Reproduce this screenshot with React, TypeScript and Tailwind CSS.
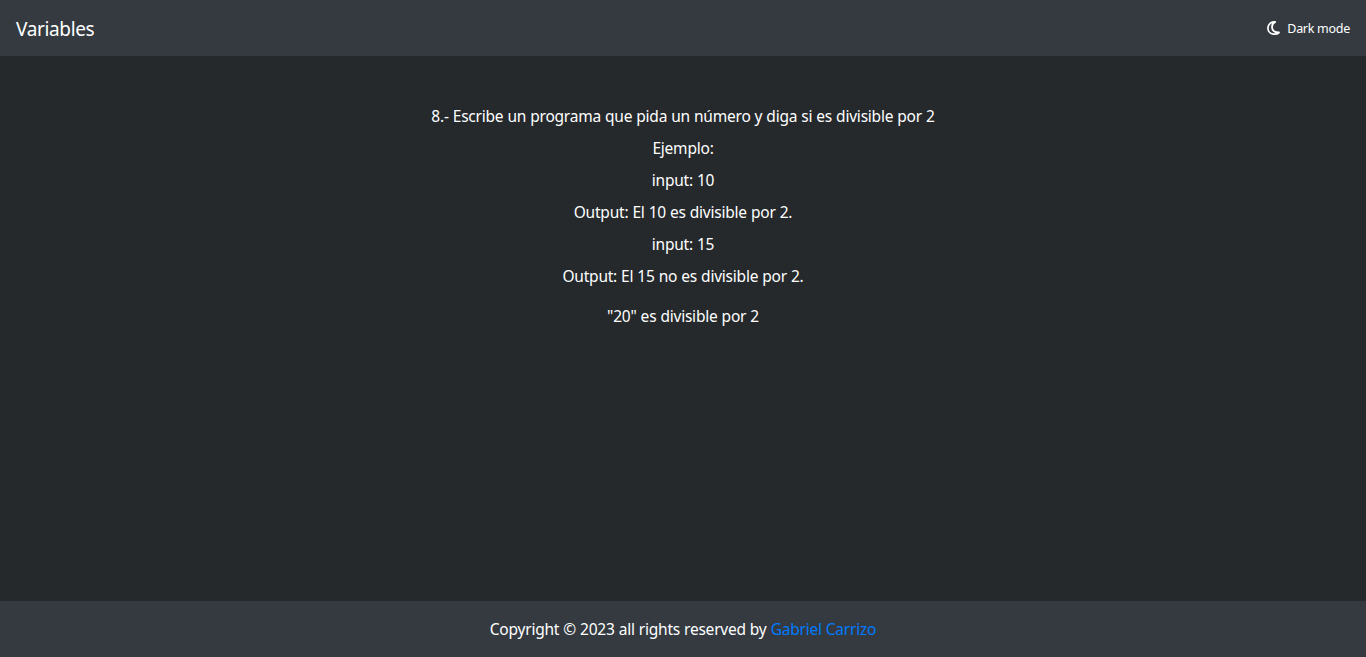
const lines = [
  "8.- Escribe un programa que pida un número y diga si es divisible por 2",
  "Ejemplo:",
  "input: 10",
  "Output: El 10 es divisible por 2.",
  "input: 15",
  "Output: El 15 no es divisible por 2.",
];

function MoonIcon() {
  return (
    <svg
      viewBox="0 0 13 14"
      className="h-[14px] w-[13px]"
      fill="none"
      stroke="currentColor"
      strokeWidth="1.8"
      strokeLinejoin="round"
      aria-hidden="true"
    >
      <path d="M8.2.9C3.8.8.9 3.4.9 7s2.8 6.1 6.6 6.1c1.9 0 3.5-.6 4.5-1.6C7.9 11.6 5 9.6 5 6.2 5 3.7 6.1 1.9 8.2.9Z" />
    </svg>
  );
}

export default function App() {
  return (
    <div className="flex h-screen flex-col bg-[#25292c] font-['Noto_Sans',sans-serif] text-[15.5px] tracking-[-0.22px] text-white [word-spacing:0.25px]">
      <header className="flex h-14 items-center justify-between bg-[#343a40] px-4">
        <h1 className="pt-0.5 text-[19px] tracking-[-0.35px]">Variables</h1>
        <button className="flex items-center gap-[7px] text-[12.5px] tracking-[-0.28px]">
          <MoonIcon />
          <span className="pt-0.5">Dark mode</span>
        </button>
      </header>
      <main className="flex flex-1 flex-col items-center pt-12">
        {lines.map((line, index) => (
          <p key={index} className="mb-2 leading-6">{line}</p>
        ))}
        <p className="mt-2 leading-6">"20" es divisible por 2</p>
      </main>
      <footer className="flex h-14 items-center justify-center bg-[#343a40]">
        <p className="pt-0.5">
          Copyright © 2023 all rights reserved by{" "}
          <a href="#" className="text-[#007bff]">Gabriel Carrizo</a>
        </p>
      </footer>
    </div>
  );
}
